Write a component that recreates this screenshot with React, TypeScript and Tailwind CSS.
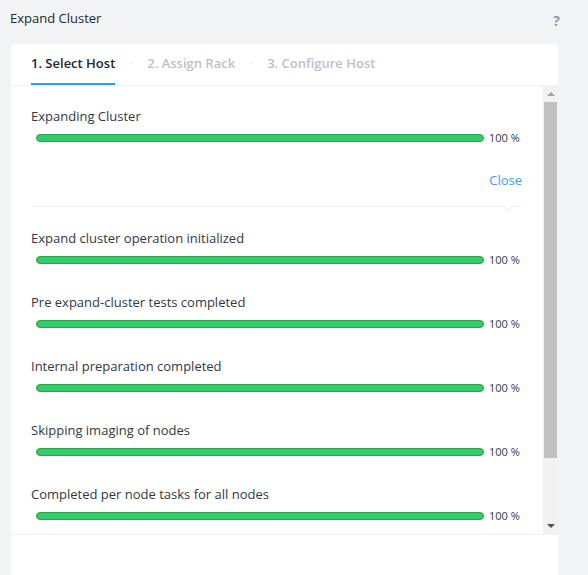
const steps = [
  'Expand cluster operation initialized',
  'Pre expand-cluster tests completed',
  'Internal preparation completed',
  'Skipping imaging of nodes',
  'Completed per node tasks for all nodes',
];

const tabs = ['1. Select Host', '2. Assign Rack', '3. Configure Host'];

function ProgressRow({ label }: { label: string }) {
  return (
    <div className="h-[64px] pt-[5px]">
      <div className="h-[18px] leading-[18px] text-[13px] text-[#33383f]">{label}</div>
      <div className="flex items-center mt-[6px] h-[14px]">
        <div className="ml-[5px] w-[448px] h-[8px] rounded-full bg-[#33cc66] border border-[#27a34f]" />
        <span className="ml-[5px] text-[11px] text-[#33383f]">100 %</span>
      </div>
    </div>
  );
}

export default function App() {
  return (
    <div
      className="w-[588px] h-[575px] bg-[#f2f3f5] overflow-hidden flex flex-col"
      style={{ fontFamily: '"Open Sans", "Liberation Sans", sans-serif' }}
    >
      <div className="h-[44px] flex items-start justify-between pl-[10px] pr-[28px]">
        <div className="mt-[9px] text-[13px] text-[#22272e] leading-[18px]">Expand Cluster</div>
        <div className="mt-[12px] text-[14px] font-bold text-[#8c9bb0] leading-[18px]">?</div>
      </div>
      <div className="ml-[11px] w-[547px] flex-1 bg-white rounded-t-[3px] flex flex-col">
        <div className="h-[42px] border-b border-[#eef0f2] flex items-stretch pl-[20px] text-[13px] font-semibold">
          {tabs.map((t, i) => (
            <div key={t} className="flex items-stretch">
              {i > 0 && (
                <div className="flex items-center px-[15px] pb-[4px]">
                  <span className="w-[2px] h-[2px] rounded-full bg-[#e4e6ea]" />
                </div>
              )}
              <div className="flex flex-col justify-end">
                <div className={`leading-[18px] mb-[11px] ${i === 0 ? 'text-[#22272e]' : 'text-[#bcc1c9]'}`}>{t}</div>
                <div className={`h-[2px] ${i === 0 ? 'bg-[#2c9ef0]' : 'bg-transparent'}`} />
              </div>
            </div>
          ))}
        </div>
        <div className="h-[449px] flex border-b border-[#eef0f2]">
          <div className="flex-1 overflow-hidden pl-[20px] pr-[21px] pt-[16px]">
            <ProgressRow label="Expanding Cluster" />
            <div className="h-[40px] flex items-start justify-end">
              <span className="text-[13px] text-[#3d9ff0] leading-[18px] mt-[5px]">Close</span>
            </div>
            <div className="relative h-px bg-[#eef0f2] mb-[17px]">
              <div className="absolute right-[11px] -top-[3px] w-[7px] h-[7px] rotate-45 bg-white border-r border-b border-[#eef0f2]" />
            </div>
            {steps.map((s) => (
              <ProgressRow key={s} label={s} />
            ))}
          </div>
          <div className="w-[15px] bg-[#f1f1f1] flex flex-col items-center">
            <div className="h-[16px] flex items-center justify-center">
              <div className="w-0 h-0 border-l-[4px] border-r-[4px] border-b-[4px] border-l-transparent border-r-transparent border-b-[#a3a3a3]" />
            </div>
            <div className="w-[13px] h-[356px] bg-[#c1c1c1]" />
            <div className="flex-1" />
            <div className="h-[16px] flex items-center justify-center">
              <div className="w-0 h-0 border-l-[4px] border-r-[4px] border-t-[4px] border-l-transparent border-r-transparent border-t-[#505050]" />
            </div>
          </div>
        </div>
      </div>
    </div>
  );
}
